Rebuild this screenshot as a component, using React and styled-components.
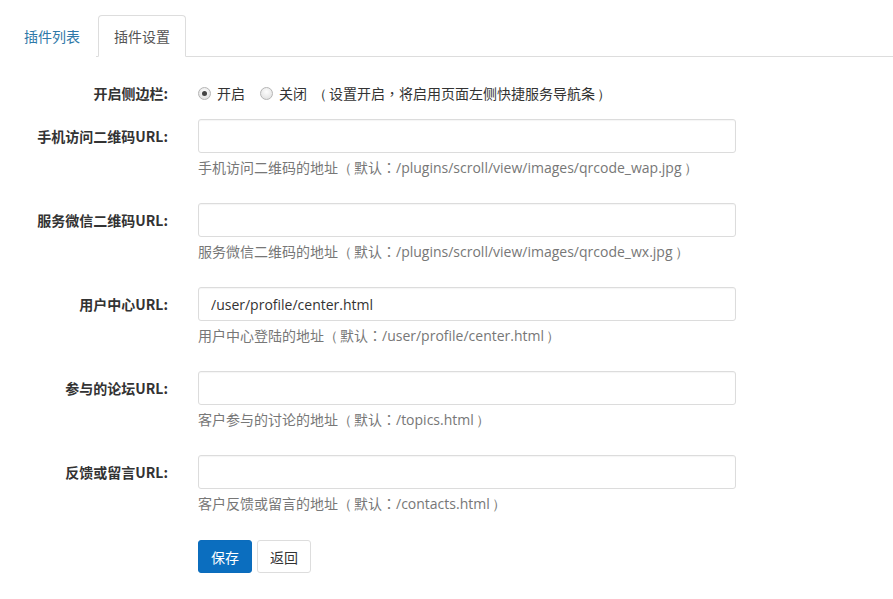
import styled, { createGlobalStyle } from "styled-components"

const Global = createGlobalStyle`
    body {
        margin: 0;
        background: #fff;
        font-family: "Segoe UI", "Open Sans", "Noto Sans CJK SC", sans-serif;
        font-size: 14px;
        color: #333;
    }
    * { box-sizing: border-box; }
`

const Page = styled.div`
    padding: 15px 0 20px 8px;
    font-family: "Noto Sans CJK SC", sans-serif;
`

const Tabs = styled.ul`
    display: flex;
    margin: 0;
    padding: 0;
    list-style: none;
    border-bottom: 1px solid #ddd;
`

const Tab = styled.li`
    margin-right: 2px;
    margin-bottom: -1px;
    padding: 10px 15px;
    line-height: 20px;
    border: 1px solid ${p => (p.active ? "#ddd" : "transparent")};
    border-bottom-color: ${p => (p.active ? "#fff" : "transparent")};
    border-radius: 4px 4px 0 0;
    background: #fff;
    color: ${p => (p.active ? "#555" : "#2f79a8")};
    cursor: pointer;
`

const Form = styled.form`
    padding-top: 18px;
`

const Group = styled.div`
    display: flex;
    gap: 30px;
    margin-bottom: ${p => p.mb || "25px"};
`

const Label = styled.label`
    width: 160px;
    flex-shrink: 0;
    text-align: right;
    font-weight: bold;
    line-height: 20px;
    padding-top: ${p => p.pt || "7px"};
    color: #333;
`

const Control = styled.div`
    width: 538px;
`

const RadioRow = styled.div`
    display: flex;
    align-items: center;
    height: 36px;
    color: #333;
    font-family: "Segoe UI", "Open Sans", "Noto Sans CJK TC", sans-serif;
`

const RadioItem = styled.span`
    display: inline-flex;
    align-items: center;
    margin-right: 15px;
`

const Dot = styled.span`
    width: 13px;
    height: 13px;
    margin-right: 6px;
    border-radius: 50%;
    border: 1px solid #b5b5b5;
    background: radial-gradient(circle at 50% 35%, #fdfdfd, #dcdcdc);
    display: inline-flex;
    align-items: center;
    justify-content: center;
    &::after {
        content: "";
        width: 5px;
        height: 5px;
        border-radius: 50%;
        background: ${p => (p.checked ? "#444" : "transparent")};
    }
`

const Note = styled.span`
    color: #333;
    margin-left: -9px;
`

// full-width brackets in the original font sit centred in their box
const Paren = styled.span`
    display: inline-block;
    width: 14px;
    text-align: center;
    font-family: "Open Sans", sans-serif;
    margin: 0 ${p => (p.open ? "2px 0 0" : "0 0 2px")};
`

const Input = styled.input`
    display: block;
    width: 100%;
    height: 34px;
    padding: 6px 12px;
    font-size: 14px;
    font-family: "Segoe UI", "Open Sans", "Noto Sans CJK SC", sans-serif;
    color: #333;
    border: 1px solid #dcdcdc;
    border-radius: 3px;
    box-shadow: inset 0 1px 1px rgba(0, 0, 0, 0.04);
    outline: none;
`

const Help = styled.div`
    margin-top: 5px;
    line-height: 20px;
    color: #777;
    font-family: "Segoe UI", "Open Sans", "Noto Sans CJK TC", sans-serif;
`

const Buttons = styled.div`
    display: flex;
    gap: 5px;
    margin-top: 1px;
`

const Button = styled.button`
    height: 33px;
    padding: 0 12px;
    font-size: 14px;
    font-family: "Noto Sans CJK SC", sans-serif;
    border-radius: 3px;
    border: 1px solid ${p => (p.primary ? "#0b6cbc" : "#ddd")};
    background: ${p => (p.primary ? "#0b6ebf" : "#fff")};
    color: ${p => (p.primary ? "#fff" : "#333")};
    cursor: pointer;
`

const fields = [
    {
        label: "手机访问二维码URL:",
        value: "",
        lead: "手机访问二维码的地址",
        def: "/plugins/scroll/view/images/qrcode_wap.jpg",
    },
    {
        label: "服务微信二维码URL:",
        value: "",
        lead: "服务微信二维码的地址",
        def: "/plugins/scroll/view/images/qrcode_wx.jpg",
    },
    {
        label: "用户中心URL:",
        value: "/user/profile/center.html",
        lead: "用户中心登陆的地址",
        def: "/user/profile/center.html",
    },
    {
        label: "参与的论坛URL:",
        value: "",
        lead: "客户参与的讨论的地址",
        def: "/topics.html",
    },
    {
        label: "反馈或留言URL:",
        value: "",
        lead: "客户反馈或留言的地址",
        def: "/contacts.html",
    },
]

export default function App() {
    return (
        <Page>
            <Global />
            <Tabs>
                <Tab>插件列表</Tab>
                <Tab active>插件设置</Tab>
            </Tabs>
            <Form onSubmit={e => e.preventDefault()}>
                <Group mb="8px">
                    <Label pt="8px">开启侧边栏:</Label>
                    <RadioRow>
                        <RadioItem><Dot checked />开启</RadioItem>
                        <RadioItem><Dot />关闭</RadioItem>
                        <Note><Paren open>（</Paren>设置开启，将启用页面左侧快捷服务导航条<Paren>）</Paren></Note>
                    </RadioRow>
                </Group>
                {fields.map(f => (
                    <Group key={f.label}>
                        <Label>{f.label}</Label>
                        <Control>
                            <Input defaultValue={f.value} />
                            <Help>
                                {f.lead}<Paren open>（</Paren>默认：{f.def}<Paren>）</Paren>
                            </Help>
                        </Control>
                    </Group>
                ))}
                <Group>
                    <Label />
                    <Buttons>
                        <Button primary type="submit">保存</Button>
                        <Button type="button">返回</Button>
                    </Buttons>
                </Group>
            </Form>
        </Page>
    )
}
